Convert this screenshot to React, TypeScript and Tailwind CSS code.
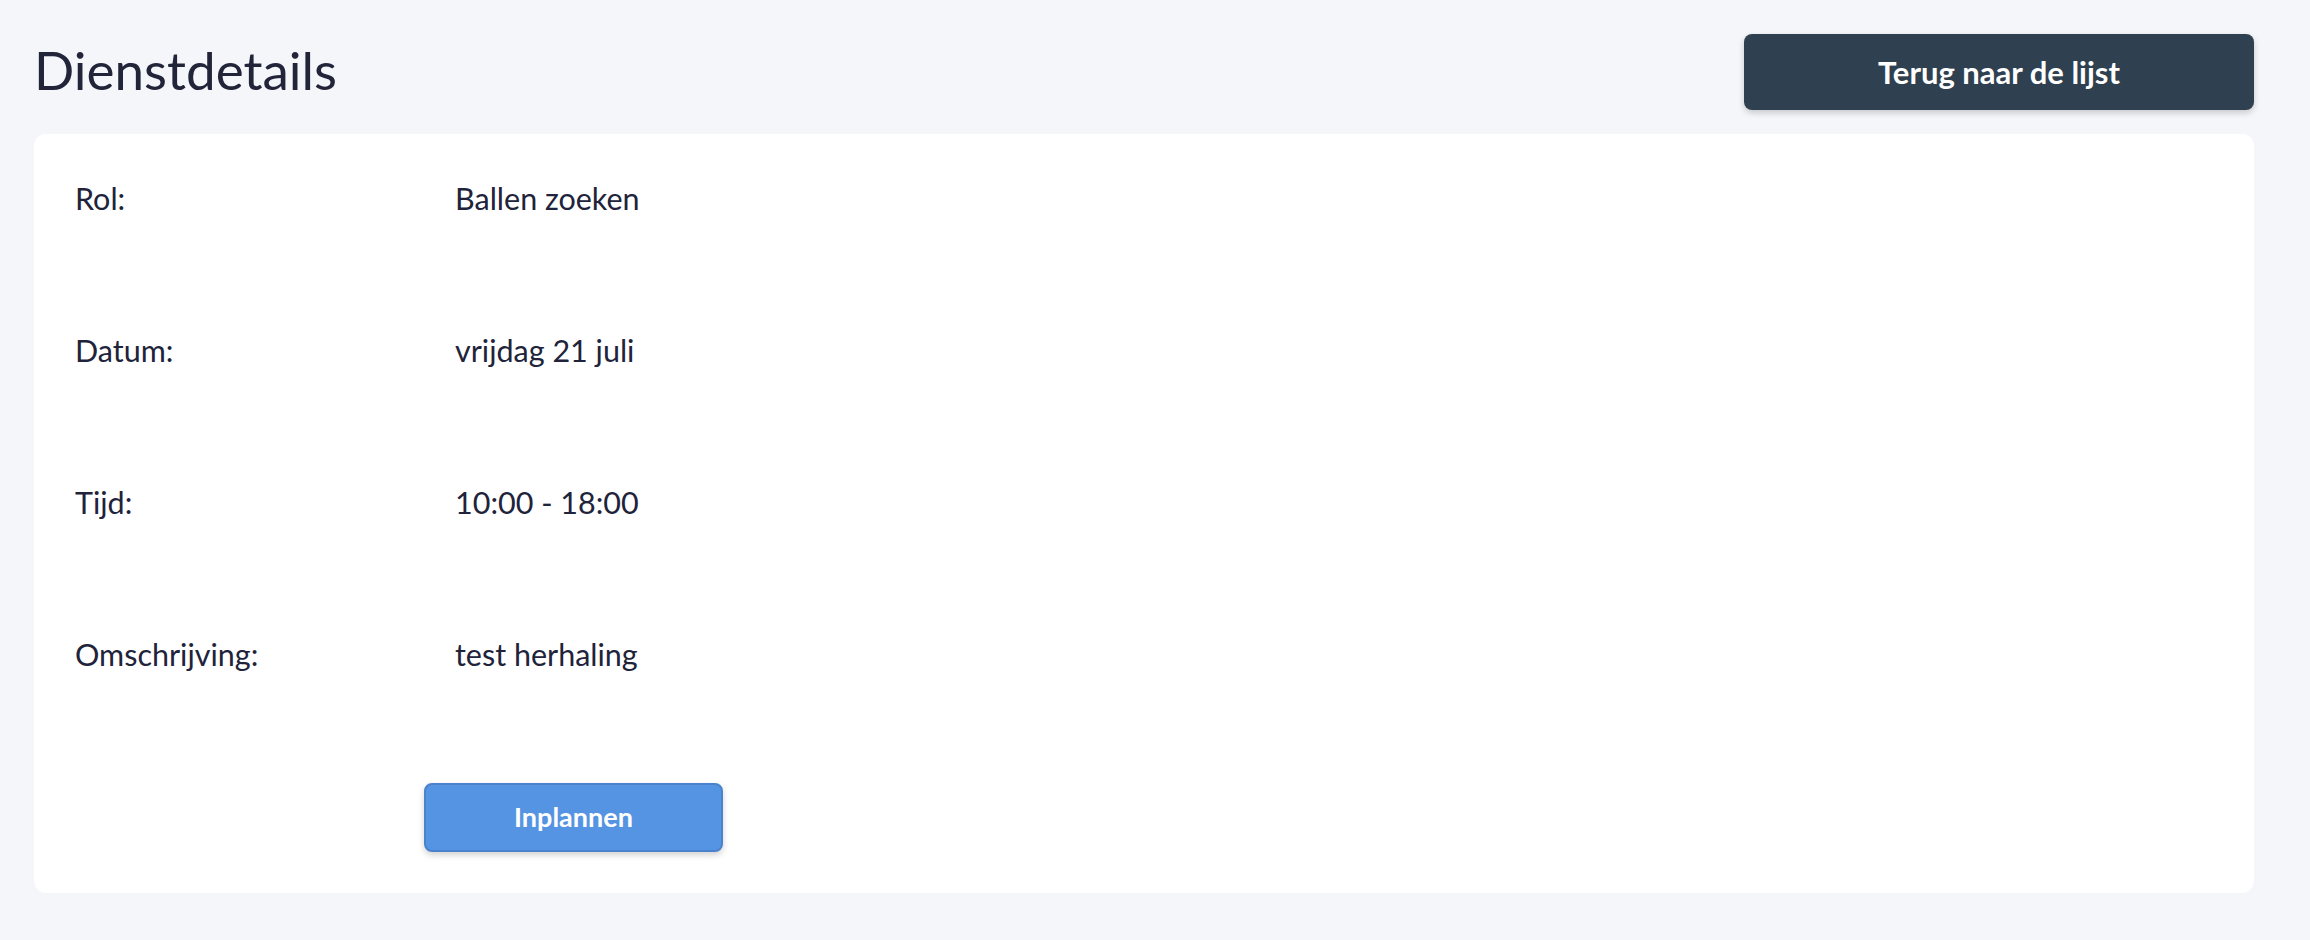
import React from 'react'

const rows = [
  { label: 'Rol:', value: 'Ballen zoeken' },
  { label: 'Datum:', value: 'vrijdag 21 juli' },
  { label: 'Tijd:', value: '10:00 - 18:00' },
  { label: 'Omschrijving:', value: 'test herhaling' },
]

export default function App() {
  return (
    <div className="min-h-screen bg-[#f5f6fa] pl-[34px] pr-[56px] pt-[34px] pb-[48px] text-[#20233a] font-['Lato',sans-serif]">
      <div className="flex items-center justify-between h-[76px]">
        <h1 className="text-[53px] leading-none font-normal text-[#222539] -mt-[5px]">Dienstdetails</h1>
        <button className="w-[510px] h-[76px] rounded-[8px] bg-[#2f4050] text-white text-[31px] font-bold shadow-[0_3px_6px_rgba(0,0,0,0.18)]">
          Terug naar de lijst
        </button>
      </div>

      <div className="mt-[24px] bg-white rounded-[12px] px-[41px] pt-[41px] pb-[41px]">
        {rows.map((row) => (
          <div key={row.label} className="grid grid-cols-[349px_1fr] h-[152px] text-[30.5px] leading-[46px]">
            <span>{row.label}</span>
            <span className="pl-[31px]">{row.value}</span>
          </div>
        ))}
        <div className="grid grid-cols-[349px_1fr]">
          <span />
          <div>
            <button className="w-[299px] h-[69px] rounded-[8px] bg-[#5494e3] border-2 border-[#4a82cc] text-white text-[27px] font-bold shadow-[0_3px_6px_rgba(0,0,0,0.18)]">
              Inplannen
            </button>
          </div>
        </div>
      </div>
    </div>
  )
}
